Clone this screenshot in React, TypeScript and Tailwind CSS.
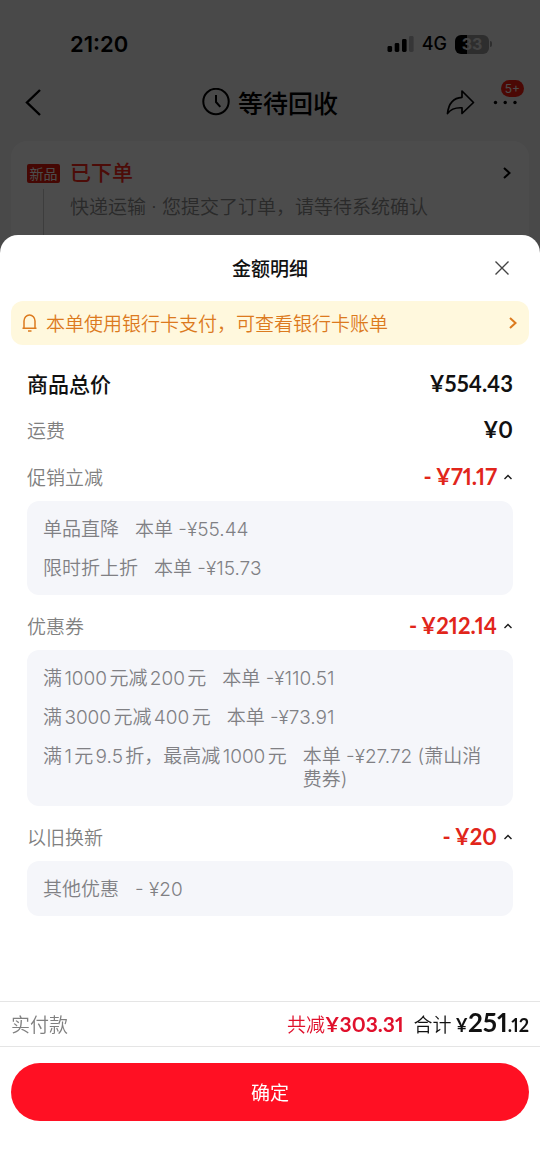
import { useState } from "react";

type Detail = { label: string; value: string };
type Group = { name: string; amount: string; details: Detail[] };

const groups: Group[] = [
  {
    name: "促销立减",
    amount: "71.17",
    details: [
      { label: "单品直降", value: "本单 -¥55.44" },
      { label: "限时折上折", value: "本单 -¥15.73" },
    ],
  },
  {
    name: "优惠券",
    amount: "212.14",
    details: [
      { label: "满1000元减200元", value: "本单 -¥110.51" },
      { label: "满3000元减400元", value: "本单 -¥73.91" },
      { label: "满1元9.5折，最高减1000元", value: "本单 -¥27.72 (萧山消费券)" },
    ],
  },
  {
    name: "以旧换新",
    amount: "20",
    details: [{ label: "其他优惠", value: "- ¥20" }],
  },
];

function StatusBar() {
  return (
    <div className="flex h-[88px] items-center justify-between pr-12 pl-[70px]">
      <span className="text-[22px] font-semibold">21:20</span>
      <div className="flex items-center gap-2">
        <svg width="27" height="17" viewBox="0 0 27 17" aria-hidden="true">
          <rect x="0.5" y="10" width="4.6" height="6" rx="1.4" />
          <rect x="7.7" y="7" width="4.6" height="9" rx="1.4" />
          <rect x="15" y="3" width="4.6" height="13" rx="1.4" />
          <rect x="22" y="0" width="4.6" height="16" rx="1.4" opacity="0.25" />
        </svg>
        <span className="text-lg font-medium">4G</span>
        <div className="flex items-center gap-px">
          <div className="flex h-[19px] w-[34px] items-center justify-center rounded-md bg-linear-to-r from-black from-34% to-[#999] to-34% text-base font-bold text-[#e4e4e4]">
            33
          </div>
          <div className="h-1.5 w-0.5 rounded-r-full bg-[#999]" />
        </div>
      </div>
    </div>
  );
}

function OrderPage() {
  return (
    <div className="min-h-screen bg-[#f3f3f6] font-[Inter,'Noto_Sans_CJK_SC',sans-serif] text-black">
      <StatusBar />
      <header className="grid h-[53px] grid-cols-[1fr_auto_1fr] items-start px-5">
        <button type="button" aria-label="返回" className="justify-self-start">
          <svg width="28" height="28" viewBox="0 0 28 28" fill="none" stroke="currentColor" strokeWidth="2.4">
            <path d="M20 2 L7 14.5 L20 27" />
          </svg>
        </button>
        <h1 className="flex items-center gap-2 font-['Noto_Sans_CJK_SC',sans-serif] text-[25px] leading-7 font-medium">
          <svg width="28" height="28" viewBox="0 0 28 28" fill="none" stroke="currentColor" strokeWidth="2">
            <circle cx="14" cy="13.5" r="12.7" />
            <path d="M14 7 V14 L18.3 18.8" />
          </svg>
          等待回收
        </h1>
        <div className="flex items-center gap-4 justify-self-end">
          <button type="button" aria-label="分享">
            <svg width="30" height="28" viewBox="0 0 30 28" fill="none" stroke="currentColor" strokeWidth="1.7" strokeLinejoin="round">
              <path d="M16 3 L27.5 14.5 L16 25.5 V19.8 C9.5 19.4 4.5 21.5 1.5 25.5 C2.5 16 7.5 9.8 16 9.3 Z" />
            </svg>
          </button>
          <button type="button" aria-label="更多" className="relative">
            <svg width="28" height="28" viewBox="0 0 28 28" fill="currentColor">
              <circle cx="3.5" cy="14.5" r="1.7" />
              <circle cx="13.2" cy="14.5" r="1.7" />
              <circle cx="23" cy="14.5" r="1.7" />
            </svg>
            <span className="absolute -top-2 -right-1 rounded-full bg-[#fa1b10] px-1 text-xs leading-[17px] text-white">5+</span>
          </button>
        </div>
      </header>
      <section className="mx-[11px] h-[300px] rounded-2xl bg-white px-4 pt-4">
        <a href="#order" className="flex h-8 items-center">
          <span className="w-[33px] rounded-xs bg-[#e8190c] text-center text-sm leading-[19px] text-white">新品</span>
          <span className="ml-2.5 flex-1 text-[21px] font-medium text-[#ff2b1c]">已下单</span>
          <svg width="12" height="16" viewBox="0 0 12 16" fill="none" stroke="currentColor" strokeWidth="2">
            <path d="M3 3 L8.5 8 L3 13" />
          </svg>
        </a>
        <div className="ml-4 h-48 border-l border-[#ccc] pl-[26px]">
          <p className="pt-1 text-[19px] leading-[30px] font-[350] text-[#8c8c8c]">
            快递运输 · 您提交了订单，请等待系统确认
          </p>
        </div>
      </section>
    </div>
  );
}

function DiscountGroup({ group }: { group: Group }) {
  const [open, setOpen] = useState(true);
  return (
    <section className="mb-[7px]">
      <button
        type="button"
        aria-expanded={open}
        onClick={() => setOpen(!open)}
        className="flex h-12 w-full items-center justify-between"
      >
        <span className="text-[#808080]">{group.name}</span>
        <span className="flex items-center gap-1 font-[Lato,sans-serif] text-[22px] font-bold text-[#e1251b] proportional-nums">
          <span>-</span>
          <span>¥{group.amount}</span>
          <svg
            className={open ? "ml-0.5" : "ml-0.5 rotate-180"}
            width="10"
            height="10"
            viewBox="0 0 10 10"
            fill="none"
            stroke="#1a1a1a"
            strokeWidth="1.4"
          >
            <path d="M1.5 7 L5 3.5 L8.5 7" />
          </svg>
        </span>
      </button>
      {open && (
        <ul className="flex flex-col gap-4 rounded-xl bg-[#f5f6fa] px-4 pt-[17px] pb-[15px] font-[Inter,'Noto_Sans_CJK_SC',sans-serif] text-[#808084]">
          {group.details.map((d) => (
            <li key={d.label} className="flex gap-4 leading-[23px] [text-autospace:normal]">
              <span className="shrink-0">{d.label}</span>
              <span>{d.value}</span>
            </li>
          ))}
        </ul>
      )}
    </section>
  );
}

export default function App() {
  return (
    <div className="font-['Noto_Sans_CJK_SC',sans-serif]">
      <OrderPage />
      <div className="fixed inset-0 flex flex-col justify-end bg-black/70">
        <div role="dialog" aria-labelledby="sheet-title" className="flex h-[80vh] flex-col rounded-t-[18px] bg-white text-[19px] font-[350]">
          <header className="grid h-[66px] shrink-0 grid-cols-[1fr_auto_1fr] items-center px-[30px]">
            <h2 id="sheet-title" className="col-start-2 font-medium text-[#111]">金额明细</h2>
            <button type="button" aria-label="关闭" className="justify-self-end">
              <svg width="16" height="16" viewBox="0 0 16 16" fill="none" stroke="#444" strokeWidth="1.4">
                <path d="M1.5 1.5 L14.5 14.5 M14.5 1.5 L1.5 14.5" />
              </svg>
            </button>
          </header>
          <main className="min-h-0 flex-1 overflow-y-auto px-[11px]">
            <a href="#bill" className="flex h-11 items-center rounded-xl bg-[#fff8dd] px-2.5 text-[#dc7a1e]">
              <svg className="mr-2 shrink-0" width="17" height="20" viewBox="0 0 17 20" fill="none" stroke="currentColor" strokeWidth="1.5">
                <path d="M1.5 15.3 H15.5 M3 15.3 V8 A5.5 6 0 0 1 14 8 V15.3 M7 18 H10.5" />
              </svg>
              <span className="flex-1">本单使用银行卡支付，可查看银行卡账单</span>
              <svg width="12" height="16" viewBox="0 0 12 16" fill="none" stroke="currentColor" strokeWidth="2">
                <path d="M3 3 L8.5 8 L3 13" />
              </svg>
            </a>
            <div className="px-4 pt-4">
              <div className="flex h-[46px] items-center justify-between text-[#111]">
                <span className="text-[21px] font-medium">商品总价</span>
                <span className="font-[Lato,sans-serif] text-[22px] font-bold proportional-nums">¥554.43</span>
              </div>
              <div className="flex h-[46px] items-center justify-between">
                <span className="text-[#808080]">运费</span>
                <span className="font-[Lato,sans-serif] text-[22px] font-bold text-[#111] proportional-nums">¥0</span>
              </div>
              {groups.map((g) => (
                <DiscountGroup key={g.name} group={g} />
              ))}
            </div>
          </main>
          <footer className="shrink-0">
            <div className="flex h-[46px] items-baseline justify-between border-y border-[#e5e5e5] px-[11px] leading-10">
              <span className="text-[#808080]">实付款</span>
              <div className="flex items-baseline gap-2.5">
                <span className="flex items-baseline text-[#e0102c]">
                  共减
                  <span className="font-[Lato,sans-serif] text-[21px] font-bold proportional-nums">¥303.31</span>
                </span>
                <span className="flex items-baseline gap-1 text-[#111]">
                  合计
                  <span className="font-[Lato,sans-serif] text-lg leading-10 font-bold proportional-nums">
                    ¥<span className="text-[26px] leading-10">251</span>.12
                  </span>
                </span>
              </div>
            </div>
            <div className="px-[11px] pt-4 pb-[53px]">
              <button type="button" className="h-[58px] w-full rounded-full bg-[#ff1023] font-normal text-white">确定</button>
            </div>
          </footer>
        </div>
      </div>
    </div>
  );
}
